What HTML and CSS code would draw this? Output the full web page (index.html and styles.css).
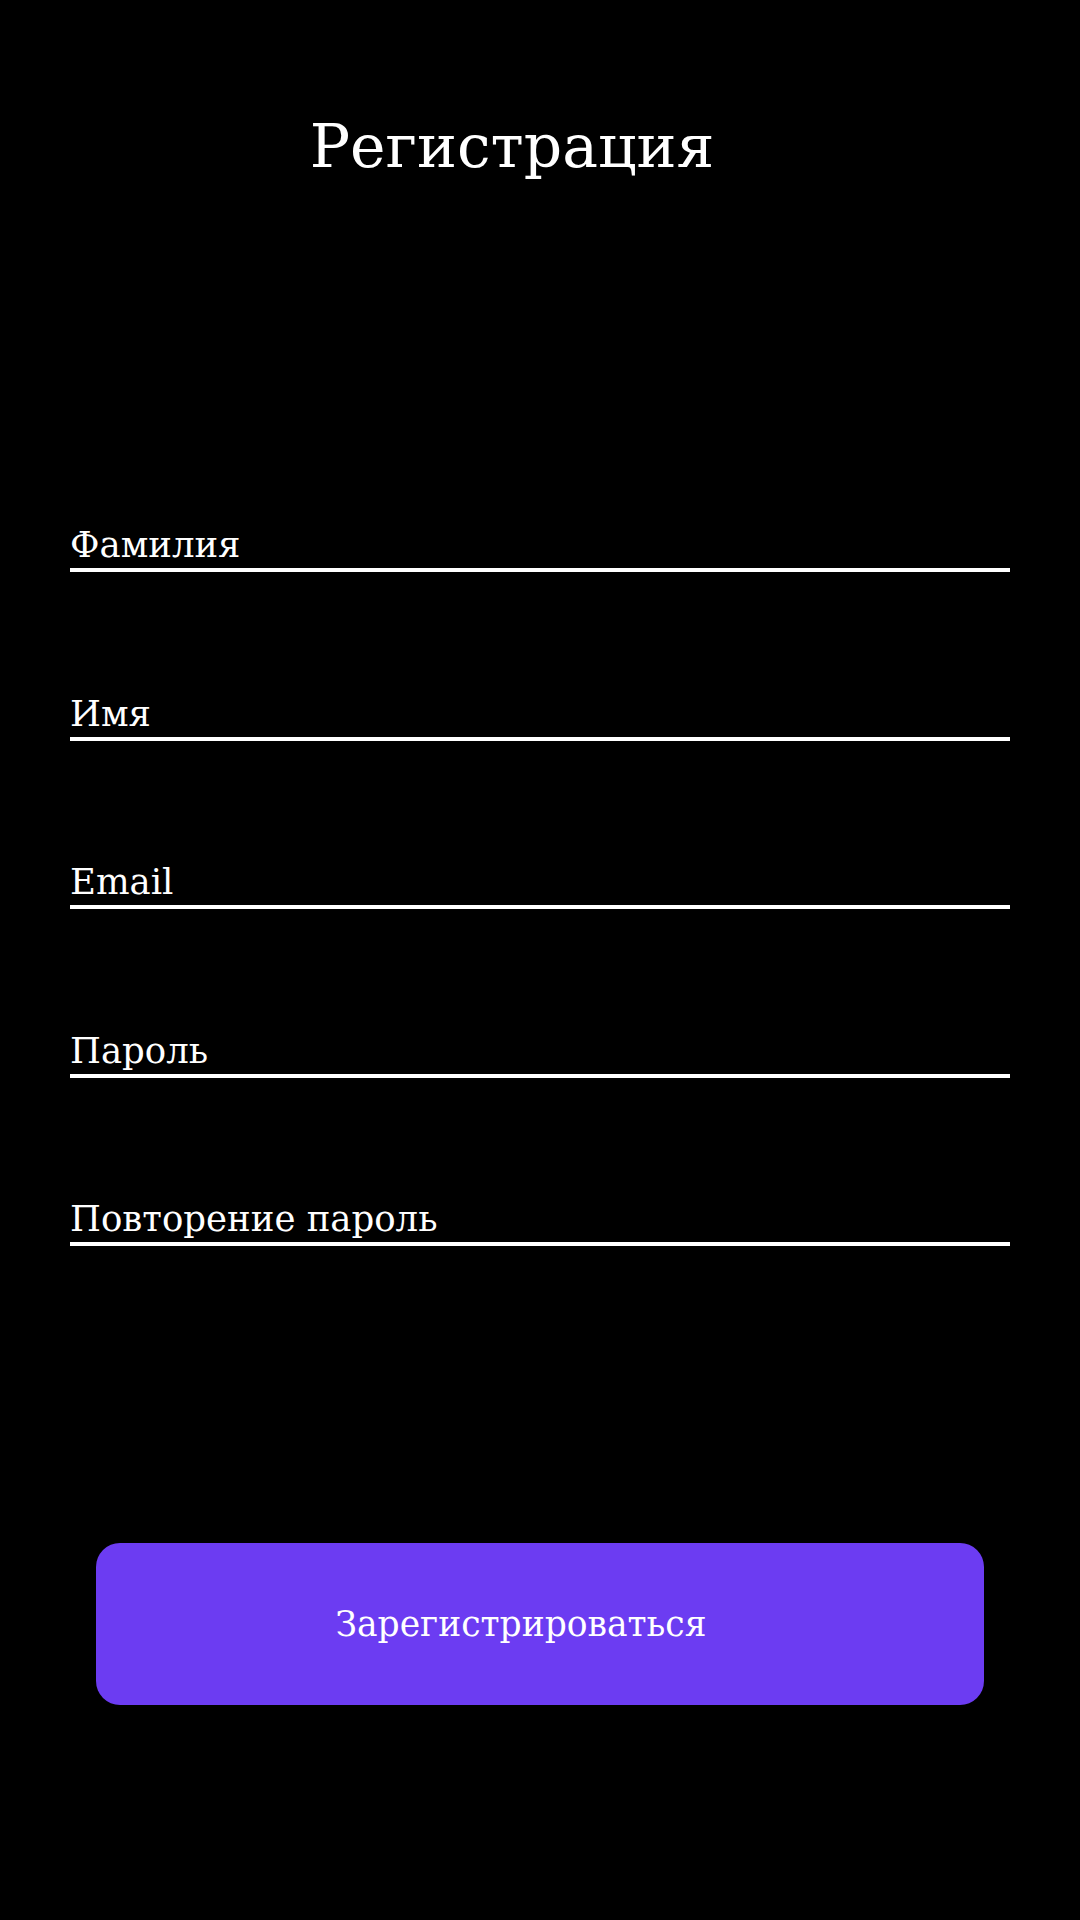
FILE: index.html
```html
<!DOCTYPE html>
<html lang="ru">
<head>
<meta charset="utf-8">
<title>Регистрация</title>
<link rel="stylesheet" href="styles.css">
</head>
<body>
<main class="screen">
  <h1 class="title">Регистрация</h1>
  <form class="form">
    <label class="field"><span class="field-label">Фамилия</span></label>
    <label class="field"><span class="field-label">Имя</span></label>
    <label class="field"><span class="field-label">Email</span></label>
    <label class="field"><span class="field-label">Пароль</span></label>
    <label class="field"><span class="field-label">Повторение пароль</span></label>
  </form>
  <button class="submit" type="button">Зарегистрироваться</button>
</main>
</body>
</html>
```
FILE: styles.css
```css
html, body {
  margin: 0;
  padding: 0;
  background: #000;
}
body {
  width: 1080px;
  height: 1920px;
  overflow: hidden;
  font-family: "DejaVu Serif", "Liberation Serif", serif;
  color: #fff;
}
.screen {
  display: flex;
  flex-direction: column;
}
.title {
  margin: 116px 0 0;
  padding-right: 56px;
  font-size: 60px;
  line-height: 60px;
  font-weight: normal;
  text-align: center;
}
.form {
  display: flex;
  flex-direction: column;
  gap: 123.5px;
  margin: 351px 70px 0;
}
.field {
  display: block;
  padding-bottom: 5.5px;
  border-bottom: 4px solid #fff;
}
.field-label {
  display: block;
  font-size: 35.5px;
  line-height: 35.5px;
}
.submit {
  margin: 297px 0 0 96px;
  width: 888px;
  height: 162px;
  border: none;
  border-radius: 24px;
  background: #6c3cf2;
  color: #fff;
  font-family: inherit;
  font-size: 34.5px;
  padding: 0 38px 0 0;
}
```
